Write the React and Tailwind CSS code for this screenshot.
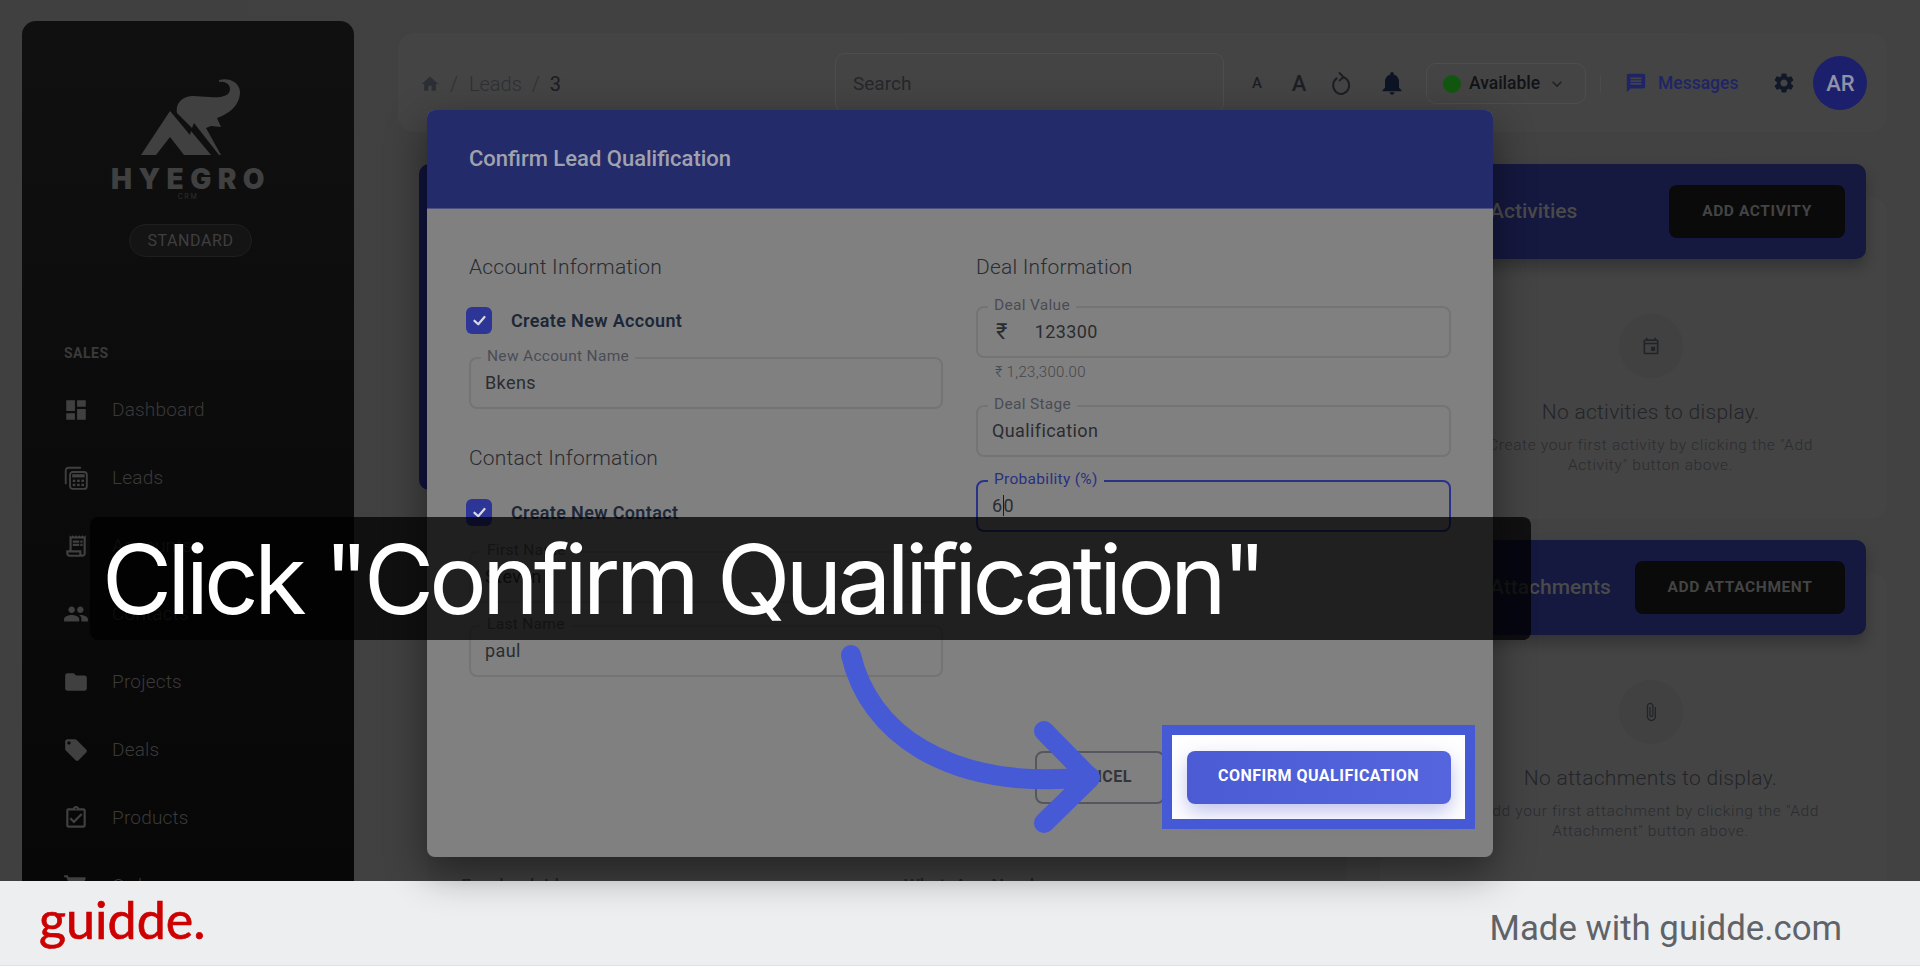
import React from "react";
import {
  MdHome, MdDashboard, MdPeople, MdFolder, MdLocalOffer, MdOutlineAssignmentTurnedIn, MdShoppingCart,
  MdMessage, MdSettings, MdNotifications, MdOutlineEvent, MdAttachFile, MdKeyboardArrowDown,
  MdOutlineReceiptLong,
} from "react-icons/md";

const ff = { fontFamily: "Roboto, sans-serif" };

function LeadsIcon({ className }) {
  return (
    <svg viewBox="0 0 24 24" className={className} fill="none" stroke="currentColor" strokeWidth="1.7">
      <path d="M2.5 17 V5 a2.5 2.5 0 0 1 2.5-2.5 H16" strokeLinecap="round" />
      <rect x="6.5" y="6.5" width="15.5" height="15.5" rx="2.5" />
      <rect x="8.5" y="8.5" width="11.5" height="3" fill="currentColor" stroke="none" />
      <g fill="currentColor" stroke="none">
        <rect x="9" y="13.5" width="2.4" height="2.2" />
        <rect x="13" y="13.5" width="2.4" height="2.2" />
        <rect x="17" y="13.5" width="2.4" height="2.2" />
        <rect x="9" y="17.3" width="2.4" height="2.2" />
        <rect x="13" y="17.3" width="2.4" height="2.2" />
        <rect x="17" y="17.3" width="2.4" height="2.2" />
      </g>
    </svg>
  );
}

function RotateIcon({ className }) {
  return (
    <svg viewBox="0 0 24 24" className={className} fill="none" stroke="currentColor" strokeWidth="2">
      <path d="M13.5 6 A8 8.5 0 1 1 7.6 7.4" strokeLinecap="round" />
      <path d="M10.5 2 L14.5 6 L10.5 9.6" strokeWidth="1.8" strokeLinejoin="round" strokeLinecap="round" />
    </svg>
  );
}

function NavItem({ icon: Icon, label }) {
  return (
    <div className="h-[68px] shrink-0 flex items-center pl-[42px] gap-[23px]">
      <Icon className="w-[26px] h-[26px] text-[#404040] -ml-[1px]" />
      <span className="text-[19px] font-light tracking-[0.2px] text-[#3a3a3a]">{label}</span>
    </div>
  );
}

function Sidebar() {
  return (
    <aside className="w-[332px] shrink-0 ml-[22px] mt-[21px] rounded-t-[14px] bg-gradient-to-b from-[#101011] to-[#070707] flex flex-col items-stretch">
      <div className="flex flex-col items-center pt-[58px]">
        <svg viewBox="142 79 100 76" className="w-[100px] h-[76px] ml-[6px]" fill="#404040">
          <path d="M171 111 L142 155 L157 155 L171 137 L185 155 L212 155 L192 131 L191 135 Z" />
          <path d="M178 113 C176 103 184 96 194 96 L210 97 C220 98 231 97 231 89 C231 84 226 81 220 82 L220 80 C232 77 241 84 241 92 C241 105 230 114 218 118 L222 127 L212 126 L207 128 L222 155 L220 155 L195 123 L193 128 Z" />
        </svg>
        <div className="mt-[12px] h-[24px] leading-[24px] text-[28px] font-black tracking-[6.4px] text-[#404040] ml-[6px]" style={{ fontFamily: "Inter, sans-serif" }}>HYEGRO</div>
        <div className="mt-[1px] text-[7px] leading-[10px] tracking-[1.6px] text-[#2f2f2f]" style={{ fontFamily: "Inter, sans-serif" }}>CRM</div>
        <div className="mt-[22px] ml-[5px] w-[123px] h-[33px] rounded-full border border-[#1f1f20] bg-[#141415] flex items-center justify-center text-[16px] tracking-[0.6px] text-[#3f3f3f]">STANDARD</div>
      </div>
      <div className="mt-[39px] mx-[18px] h-px bg-[#1c1c1d]" />
      <div className="mt-[50px] pl-[42px] text-[14px] leading-[14px] font-bold tracking-[0.5px] text-[#3a3a3a]">SALES</div>
      <div className="mt-[16px] flex flex-col">
        <NavItem icon={MdDashboard} label="Dashboard" />
        <NavItem icon={LeadsIcon} label="Leads" />
        <NavItem icon={MdOutlineReceiptLong} label="Accounts" />
        <NavItem icon={MdPeople} label="Contacts" />
        <NavItem icon={MdFolder} label="Projects" />
        <NavItem icon={MdLocalOffer} label="Deals" />
        <NavItem icon={MdOutlineAssignmentTurnedIn} label="Products" />
        <NavItem icon={MdShoppingCart} label="Orders" />
      </div>
    </aside>
  );
}

function TopBar() {
  return (
    <header className="h-[99px] w-[1489px] rounded-[16px] bg-[#444444] flex items-start shrink-0 pl-[22px]">
      <div className="flex items-center h-[101px] text-[20px] text-[#2f3034] w-[169px]">
        <MdHome className="w-[20px] h-[20px] text-[#2c2f35]" />
        <span className="ml-[10px] font-light">/</span>
        <span className="ml-[11px] font-light">Leads</span>
        <span className="ml-[10px] font-light">/</span>
        <span className="ml-[10px] text-[#1b1d22]">3</span>
      </div>
      <div className="ml-[246px] mt-[20px] w-[389px] h-[60px] rounded-[10px] border border-[#4e4e4e] flex items-center pl-[17px] pt-[2px] text-[19px] text-[#26272b]">Search</div>
      <div className="ml-[25px] h-[100px] flex items-center text-[#1c1e24]">
        <span className="text-[15px] font-medium w-[16px] text-center">A</span>
        <span className="ml-[26px] text-[22px] font-medium w-[16px] text-center">A</span>
        <RotateIcon className="ml-[22px] w-[24px] h-[26px]" />
        <MdNotifications className="ml-[25px] w-[28px] h-[28px] text-[#0d1424]" />
      </div>
      <div className="ml-[20px] mt-[30px] w-[160px] h-[41px] rounded-[10px] border border-[#4e4e4e] flex items-center pl-[16px]">
        <span className="w-[18px] h-[18px] rounded-full bg-[#12570f]" />
        <span className="ml-[8px] text-[17.5px] font-medium text-[#111317]">Available</span>
        <MdKeyboardArrowDown className="ml-[7px] w-[20px] h-[20px] text-[#222]" />
      </div>
      <div className="ml-[14px] mt-[43px] w-px h-[16px] bg-[#4b4b4b]" />
      <div className="ml-[24px] h-[100px] flex items-center text-[#1f2466]">
        <MdMessage className="w-[22px] h-[22px]" />
        <span className="ml-[11px] text-[17.5px] font-medium">Messages</span>
      </div>
      <div className="ml-[34px] h-[100px] flex items-center">
        <MdSettings className="w-[24px] h-[24px] text-[#111827]" />
        <span className="ml-[17px] w-[54px] h-[54px] rounded-full bg-[#1c1f6b] flex items-center justify-center text-[22px] font-medium text-[#8f92a8]">AR</span>
      </div>
    </header>
  );
}

function Panel({ title, button, width, icon: Icon, empty, lines, pad }) {
  return (
    <section className="relative">
      <div className="absolute z-10 left-[-40px] right-[21px] top-[-33px] h-[95px] rounded-[10px] bg-[#15183f] flex items-center justify-end pr-[21px] shadow-[0_8px_14px_rgba(0,0,0,0.25)]">
        <span className="absolute left-[150px] text-[21px] font-medium text-[#4a4a4a]">{title}</span>
        <span className={`${width} h-[53px] rounded-[8px] bg-[#0a0a0a] flex items-center justify-center text-[15.5px] font-bold tracking-[0.6px] text-[#444444]`}>{button}</span>
      </div>
      <div className={`h-[322px] rounded-[16px] bg-[#444444] flex flex-col items-center pl-[34px] ${pad}`}>
        <span className="w-[64px] h-[64px] rounded-full bg-[#414141] flex items-center justify-center -mt-[2px]">
          <Icon className="w-[20px] h-[20px] text-[#222428]" />
        </span>
        <div className="mt-[19px] text-[21px] font-light text-[#23252a] tracking-[0.3px]">{empty}</div>
        <div className="mt-[6px] text-[15.5px] leading-[20px] font-light text-[#2a2c31] tracking-[0.65px] text-center w-[460px]">
          {lines[0]}<br />{lines[1]}
        </div>
      </div>
    </section>
  );
}

function Background() {
  return (
    <div className="relative isolate h-[881px] overflow-hidden flex bg-gradient-to-r from-[#404040] to-[#424242]">
      <Sidebar />
      <main className="ml-[44px] mt-[33px] flex flex-col min-w-0">
        <TopBar />
        <div className="mt-[65px] flex gap-[33px]">
          <div className="w-[949px] shrink-0 relative pl-[30px]">
            <div className="absolute left-[21px] top-[-33px] w-[918px] h-[326px] rounded-[10px] bg-[#10143c]" />
            <div className="h-[700px] rounded-[16px] bg-[#3f3f3f] pt-[675px] pl-[33px] flex gap-[345px] text-[18px] text-[#202226] font-medium">
              <span>Facebook Id</span>
              <span>WhatsApp Number</span>
            </div>
          </div>
          <div className="w-[507px] shrink-0 flex flex-col gap-[54px]">
            <Panel title="Activities" button="ADD ACTIVITY" width="w-[176px]" icon={MdOutlineEvent} empty="No activities to display." lines={['Create your first activity by clicking the "Add', 'Activity" button above.']} pad="pt-[119px]" />
            <Panel title="Attachments" button="ADD ATTACHMENT" width="w-[210px]" icon={MdAttachFile} empty="No attachments to display." lines={['Add your first attachment by clicking the "Add', 'Attachment" button above.']} pad="pt-[109px]" />
          </div>
        </div>
      </main>
    </div>
  );
}

function Field({ label, value, focused, prefix }) {
  return (
    <div className={`relative h-[52px] rounded-[8px] border-2 ${focused ? "border-[#293188]" : "border-[#747474]"} flex items-center pl-[14px] pb-[1px] text-[18px] tracking-[0.4px] text-[#2b2c30]`}>
      <span className={`absolute left-[10px] -top-[12px] px-[6px] bg-[#808080] text-[15.5px] leading-[18px] tracking-[0.3px] ${focused ? "text-[#283080]" : "text-[#4a4c55]"}`}>{label}</span>
      {prefix && <span className="ml-[4px] mr-[27px] text-[22px]">{prefix}</span>}
      {focused ? <span>6<span className="border-l border-[#1c1c1c]">0</span></span> : <span>{value}</span>}
    </div>
  );
}

function Check({ label }) {
  return (
    <div className="flex items-center h-[27px] -ml-[3px]">
      <span className="w-[26px] h-[27px] rounded-[6px] bg-[#2d3596] flex items-center justify-center">
        <svg viewBox="0 0 24 24" className="w-[15px] h-[15px]" fill="none" stroke="#d8d8e4" strokeWidth="3.6">
          <path d="M4 12.5 L10 18 L20 6.5" strokeLinecap="round" strokeLinejoin="round" />
        </svg>
      </span>
      <span className="ml-[19px] text-[18px] font-semibold text-[#1d2738] tracking-[0.35px]">{label}</span>
    </div>
  );
}

function Heading({ children, className }) {
  return <h3 className={`${className} h-[26px] leading-[26px] text-[21px] font-light text-[#2a2c31] tracking-[0.2px]`}>{children}</h3>;
}

function Modal() {
  return (
    <div className="absolute left-[427px] top-[110px] w-[1066px] h-[747px] rounded-[8px] bg-[#808080] overflow-hidden shadow-[0_14px_40px_rgba(0,0,0,0.45)]">
      <div className="h-[99px] bg-[#242b6b] border-b border-[#4c5180] flex items-center pl-[42px] pb-[1px] text-[22px] font-medium text-[#a0a2ad]">Confirm Lead Qualification</div>
      <div className="flex pl-[42px] gap-[33px]">
        <div className="w-[474px] flex flex-col">
          <Heading className="mt-[45px]">Account Information</Heading>
          <div className="mt-[27px]"><Check label="Create New Account" /></div>
          <div className="mt-[23px]"><Field label="New Account Name" value="Bkens" /></div>
          <Heading className="mt-[36px]">Contact Information</Heading>
          <div className="mt-[28px]"><Check label="Create New Contact" /></div>
          <div className="mt-[25px]"><Field label="First Name" value="Steven" /></div>
          <div className="mt-[22px]"><Field label="Last Name" value="paul" /></div>
        </div>
        <div className="w-[475px] flex flex-col">
          <Heading className="mt-[45px]">Deal Information</Heading>
          <div className="mt-[26px]"><Field label="Deal Value" value="123300" prefix="₹" /></div>
          <div className="mt-[4px] pl-[19px] h-[20px] leading-[20px] text-[15px] font-light tracking-[0.3px] text-[#45464b]">₹ 1,23,300.00</div>
          <div className="mt-[23px]"><Field label="Deal Stage" value="Qualification" /></div>
          <div className="mt-[23px]"><Field label="Probability (%)" value="60" focused /></div>
        </div>
      </div>
    </div>
  );
}

export default function App() {
  return (
    <div className="relative w-[1920px] h-[966px] overflow-hidden" style={ff}>
      <Background />
      <footer className="h-[85px] bg-[#eceef0] border-b border-[#dfe1e4] flex items-center justify-between pl-[39px] pr-[78px]">
        <span className="text-[52px] leading-[52px] text-[#cc0000] -mt-[8px] [-webkit-text-stroke:0.7px_#cc0000]" style={{ fontFamily: "Lato, sans-serif" }}>guidde.</span>
        <span className="text-[34.8px] mt-[11px] text-[#5f6368]">Made with guidde.com</span>
      </footer>

      <Modal />

      <div className="absolute left-[1035px] top-[751px] w-[130px] h-[53px] rounded-[8px] border-2 border-[#55565e] flex items-center justify-center pb-[2px] text-[16px] font-bold tracking-[0.5px] text-[#33353c]">CANCEL</div>

      <div className="absolute left-[90px] top-[517px] w-[1441px] h-[123px] rounded-[8px] bg-black/75 flex items-center pl-[12px] text-white text-[96px] font-normal tracking-[-4.85px]" style={{ fontFamily: "Inter, sans-serif" }}>
        Click "Confirm Qualification"
      </div>

      <div className="absolute left-[1162px] top-[725px] w-[313px] h-[104px] border-[10px] border-[#475ad6] bg-white flex items-center justify-center">
        <span className="w-[264px] h-[53px] rounded-[8px] bg-gradient-to-r from-[#4a5bd4] to-[#5565dd] shadow-[0_8px_20px_rgba(71,80,200,0.35)] flex items-center justify-center pb-[2px] text-[16px] font-bold tracking-[0.5px] text-white">CONFIRM QUALIFICATION</span>
      </div>

      <svg className="absolute left-0 top-0 pointer-events-none" width="1920" height="966" fill="none">
        <path d="M851 655 C868 730 945 792 1090 777" stroke="#475ad6" strokeWidth="20" strokeLinecap="round" />
        <path d="M1044 731 L1090 778 L1044 823" stroke="#475ad6" strokeWidth="20" strokeLinecap="round" strokeLinejoin="round" />
      </svg>
    </div>
  );
}
